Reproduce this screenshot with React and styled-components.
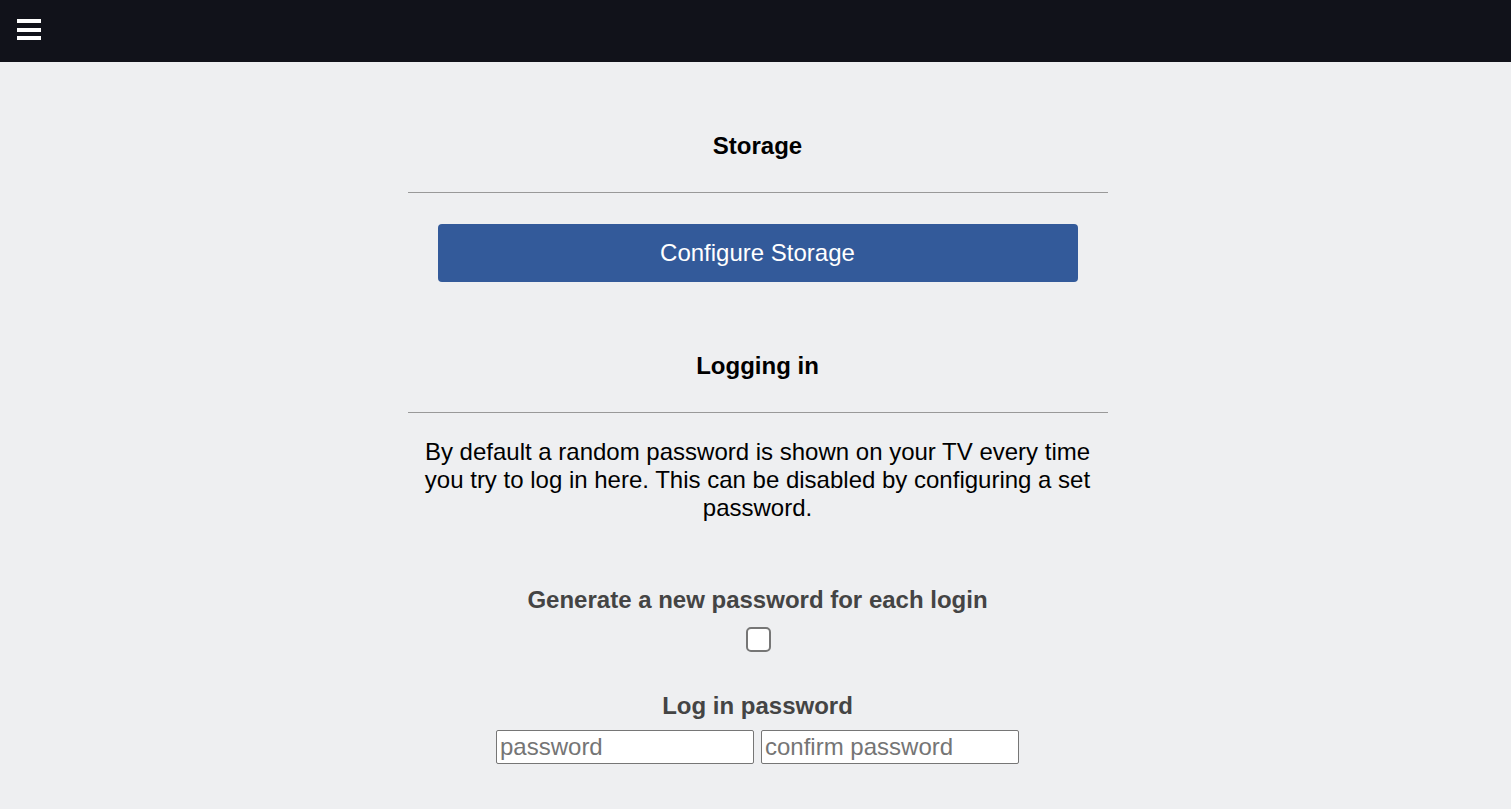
import React from "react";
import styled, { createGlobalStyle } from "styled-components";

const Global = createGlobalStyle`
  html, body { margin: 0; padding: 0; background: #eeeff1; }
  body { font-family: "Liberation Sans", Arial, sans-serif; color: #000; }
  * { box-sizing: border-box; }
`;

const TopBar = styled.header`
  height: 62px;
  background: #11121a;
  display: flex;
  align-items: center;
  padding-left: 17px;
`;

const MenuButton = styled.button`
  width: 24px;
  height: 21px;
  padding: 0;
  border: 0;
  background: transparent;
  display: flex;
  flex-direction: column;
  justify-content: space-between;
  cursor: pointer;
  margin-top: -3px;
`;

const MenuBar = styled.span`
  display: block;
  width: 24px;
  height: 4px;
  background: #fff;
`;

const Main = styled.main`
  padding: 70px 0 40px 4px;
`;

const Column = styled.div`
  width: 700px;
  margin: 0 auto;
  display: flex;
  flex-direction: column;
  align-items: center;
  text-align: center;
`;

const SectionTitle = styled.h2`
  margin: 0;
  font-size: 24px;
  line-height: 28px;
  font-weight: bold;
  color: #000;
`;

const Rule = styled.hr`
  width: 100%;
  margin: ${(p) => p.$top}px 0 ${(p) => p.$bottom}px;
  border: 0;
  border-top: 1px solid #999;
  height: 0;
`;

const PrimaryButton = styled.button`
  width: 640px;
  height: 58px;
  background: #335a9a;
  color: #fff;
  border: 0;
  border-radius: 4px;
  font-family: "Liberation Sans", Arial, sans-serif;
  font-size: 24px;
  cursor: pointer;
  margin-bottom: 70px;
`;

const Paragraph = styled.p`
  margin: 0 0 64px;
  padding: 0 10px;
  font-size: 24px;
  line-height: 28px;
`;

const FieldLabel = styled.label`
  display: block;
  font-size: 24px;
  line-height: 28px;
  font-weight: bold;
  color: #444;
  margin-bottom: ${(p) => p.$gap}px;
`;

const Checkbox = styled.input.attrs({ type: "checkbox" })`
  appearance: none;
  width: 25px;
  height: 25px;
  margin: 0 0 40px 1px;
  border: 2px solid #767676;
  border-radius: 5px;
  background: #fff;
  cursor: pointer;
`;

const InputRow = styled.div`
  display: flex;
  gap: 7px;
`;

const TextInput = styled.input`
  width: 258px;
  height: 34px;
  border: 1px solid #767676;
  border-radius: 2px;
  background: #fff;
  padding: 0 3px;
  font-family: "Liberation Sans", Arial, sans-serif;
  font-size: 24px;
  color: #000;
  &::placeholder { color: #757575; }
`;

export default function App() {
  return (
    <>
      <Global />
      <TopBar>
        <MenuButton aria-label="menu">
          <MenuBar />
          <MenuBar />
          <MenuBar />
        </MenuButton>
      </TopBar>
      <Main>
        <Column>
          <SectionTitle>Storage</SectionTitle>
          <Rule $top={32} $bottom={31} />
          <PrimaryButton>Configure Storage</PrimaryButton>
          <SectionTitle>Logging in</SectionTitle>
          <Rule $top={32} $bottom={25} />
          <Paragraph>
            By default a random password is shown on your TV every time you try to log in here.
            This can be disabled by configuring a set password.
          </Paragraph>
          <FieldLabel $gap={13}>Generate a new password for each login</FieldLabel>
          <Checkbox />
          <FieldLabel $gap={10}>Log in password</FieldLabel>
          <InputRow>
            <TextInput type="password" placeholder="password" />
            <TextInput type="password" placeholder="confirm password" />
          </InputRow>
        </Column>
      </Main>
    </>
  );
}
